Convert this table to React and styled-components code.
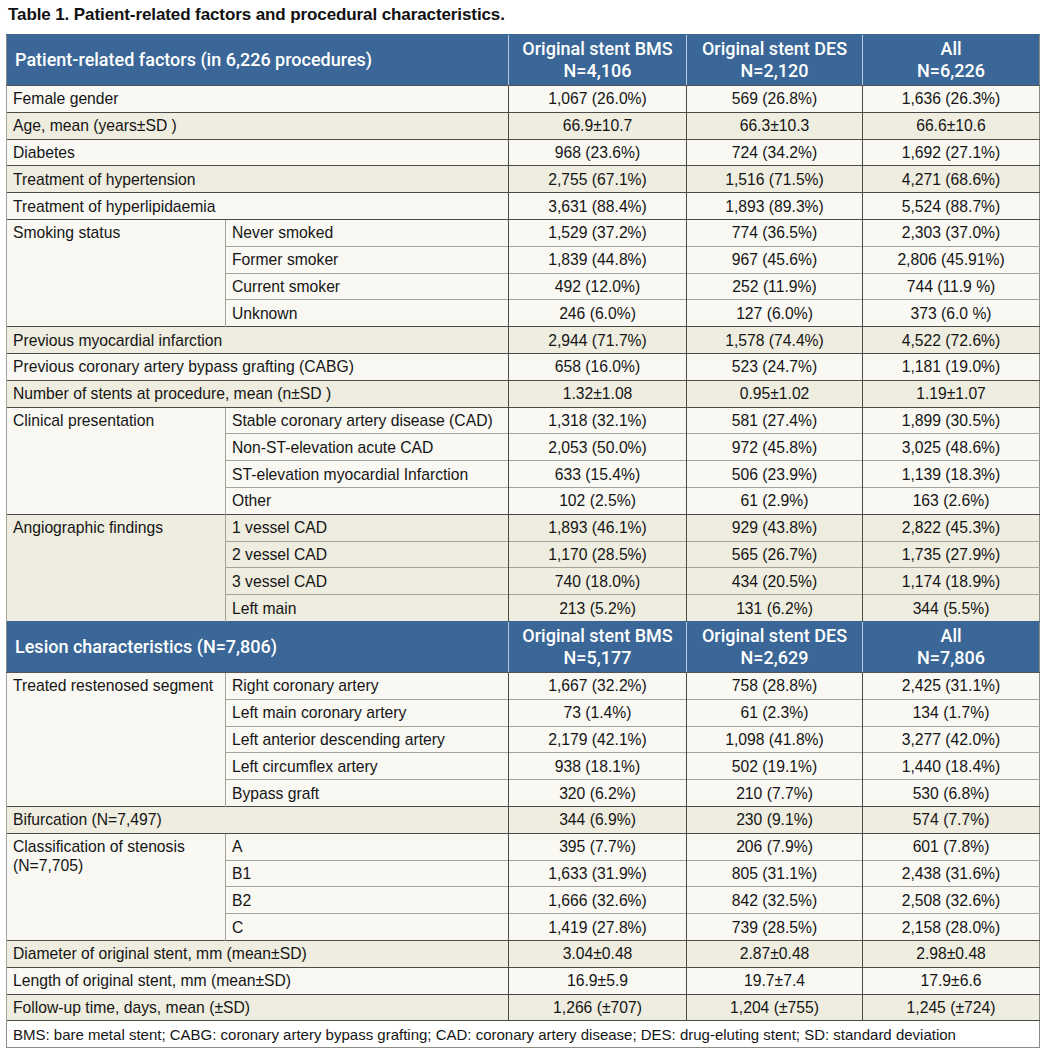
import React from 'react';
import styled, { createGlobalStyle } from 'styled-components';

const Global = createGlobalStyle`
  html, body { margin: 0; padding: 0; background: #ffffff; }
  body { font-family: "Liberation Sans", Arial, sans-serif; color: #151515; }
`;

const Page = styled.div`
  padding: 4px 6px 0 6px;
  width: 1033px;
`;

const Title = styled.h1`
  margin: 0 0 0 2px;
  height: 30px;
  line-height: 22px;
  font-size: 17px;
  font-weight: 700;
  letter-spacing: -0.1px;
  color: #111;
`;

const Table = styled.table`
  width: 1033px;
  border-collapse: collapse;
  table-layout: fixed;
  font-size: 15.7px;
  border-left: 1px solid #8c8c86;
  border-right: 1px solid #8c8c86;
`;

const HeadRow = styled.tr`
  height: 51px;
  background: #3a6797;
`;

const HeadCell = styled.th`
  color: #ffffff;
  font-family: Roboto, "Liberation Sans", sans-serif;
  font-weight: 500;
  font-size: 18px;
  line-height: 22px;
  text-align: ${p => (p.$left ? 'left' : 'center')};
  padding: ${p => (p.$left ? '0 8px' : '0 4px')};
  border-left: ${p => (p.$left ? 'none' : '1px solid #b9c8da')};
  border-top: 1px solid #3a6797;
  border-bottom: 1px solid #555;
  vertical-align: middle;
  white-space: nowrap;
`;

const Row = styled.tr`
  height: 26.8px;
  background: ${p => (p.$shaded ? '#efeddf' : '#f9f8f3')};
`;

const Cell = styled.td`
  padding: 0 6px;
  line-height: 19px;
  vertical-align: ${p => (p.$top ? 'top' : 'middle')};
  padding-top: ${p => (p.$top ? '3px' : '0')};
  text-align: ${p => (p.$center ? 'center' : 'left')};
  border-top: 1px solid ${p => (p.$sub ? '#a3a39c' : '#4a4a48')};
  border-left: 1px solid ${p => (p.$soft ? '#a3a39c' : '#4a4a48')};
  white-space: nowrap;
`;

const LabelCell = styled(Cell)`
  white-space: ${p => (p.$wrap ? 'normal' : 'nowrap')};
`;

const FootRow = styled.tr`
  height: 27px;
  background: #ffffff;
`;

const FootCell = styled.td`
  padding: 0 6px;
  font-size: 15px;
  border-top: 1px solid #4a4a48;
  border-bottom: 1px solid #8c8c86;
  vertical-align: middle;
`;

const patient = [
  { label: 'Female gender', v: ['1,067 (26.0%)', '569 (26.8%)', '1,636 (26.3%)'] },
  { label: 'Age, mean (years±SD )', v: ['66.9±10.7', '66.3±10.3', '66.6±10.6'], shaded: true },
  { label: 'Diabetes', v: ['968 (23.6%)', '724 (34.2%)', '1,692 (27.1%)'] },
  { label: 'Treatment of hypertension', v: ['2,755 (67.1%)', '1,516 (71.5%)', '4,271 (68.6%)'], shaded: true },
  { label: 'Treatment of hyperlipidaemia', v: ['3,631 (88.4%)', '1,893 (89.3%)', '5,524 (88.7%)'] },
  {
    label: 'Smoking status',
    subs: [
      ['Never smoked', '1,529 (37.2%)', '774 (36.5%)', '2,303 (37.0%)'],
      ['Former smoker', '1,839 (44.8%)', '967 (45.6%)', '2,806 (45.91%)'],
      ['Current smoker', '492 (12.0%)', '252 (11.9%)', '744 (11.9 %)'],
      ['Unknown', '246 (6.0%)', '127 (6.0%)', '373 (6.0 %)'],
    ],
  },
  { label: 'Previous myocardial infarction', v: ['2,944 (71.7%)', '1,578 (74.4%)', '4,522 (72.6%)'], shaded: true },
  { label: 'Previous coronary artery bypass grafting (CABG)', v: ['658 (16.0%)', '523 (24.7%)', '1,181 (19.0%)'] },
  { label: 'Number of stents at procedure, mean (n±SD )', v: ['1.32±1.08', '0.95±1.02', '1.19±1.07'], shaded: true },
  {
    label: 'Clinical presentation',
    subs: [
      ['Stable coronary artery disease (CAD)', '1,318 (32.1%)', '581 (27.4%)', '1,899 (30.5%)'],
      ['Non-ST-elevation acute CAD', '2,053 (50.0%)', '972 (45.8%)', '3,025 (48.6%)'],
      ['ST-elevation myocardial Infarction', '633 (15.4%)', '506 (23.9%)', '1,139 (18.3%)'],
      ['Other', '102 (2.5%)', '61 (2.9%)', '163 (2.6%)'],
    ],
  },
  {
    label: 'Angiographic findings',
    shaded: true,
    subs: [
      ['1 vessel CAD', '1,893 (46.1%)', '929 (43.8%)', '2,822 (45.3%)'],
      ['2 vessel CAD', '1,170 (28.5%)', '565 (26.7%)', '1,735 (27.9%)'],
      ['3 vessel CAD', '740 (18.0%)', '434 (20.5%)', '1,174 (18.9%)'],
      ['Left main', '213 (5.2%)', '131 (6.2%)', '344 (5.5%)'],
    ],
  },
];

const lesion = [
  {
    label: 'Treated restenosed segment',
    subs: [
      ['Right coronary artery', '1,667 (32.2%)', '758 (28.8%)', '2,425 (31.1%)'],
      ['Left main coronary artery', '73 (1.4%)', '61 (2.3%)', '134 (1.7%)'],
      ['Left anterior descending artery', '2,179 (42.1%)', '1,098 (41.8%)', '3,277 (42.0%)'],
      ['Left circumflex artery', '938 (18.1%)', '502 (19.1%)', '1,440 (18.4%)'],
      ['Bypass graft', '320 (6.2%)', '210 (7.7%)', '530 (6.8%)'],
    ],
  },
  { label: 'Bifurcation (N=7,497)', v: ['344 (6.9%)', '230 (9.1%)', '574 (7.7%)'], shaded: true },
  {
    label: 'Classification of stenosis (N=7,705)',
    wrap: true,
    subs: [
      ['A', '395 (7.7%)', '206 (7.9%)', '601 (7.8%)'],
      ['B1', '1,633 (31.9%)', '805 (31.1%)', '2,438 (31.6%)'],
      ['B2', '1,666 (32.6%)', '842 (32.5%)', '2,508 (32.6%)'],
      ['C', '1,419 (27.8%)', '739 (28.5%)', '2,158 (28.0%)'],
    ],
  },
  { label: 'Diameter of original stent, mm (mean±SD)', v: ['3.04±0.48', '2.87±0.48', '2.98±0.48'], shaded: true },
  { label: 'Length of original stent, mm (mean±SD)', v: ['16.9±5.9', '19.7±7.4', '17.9±6.6'] },
  { label: 'Follow-up time, days, mean (±SD)', v: ['1,266 (±707)', '1,204 (±755)', '1,245 (±724)'], shaded: true },
];

function Header({ title, n }) {
  return (
    <HeadRow>
      <HeadCell $left colSpan={2}>{title}</HeadCell>
      <HeadCell>Original stent BMS<br />N={n[0]}</HeadCell>
      <HeadCell>Original stent DES<br />N={n[1]}</HeadCell>
      <HeadCell>All<br />N={n[2]}</HeadCell>
    </HeadRow>
  );
}

function Values({ v, sub }) {
  return v.map((x, i) => (
    <Cell key={i} $center $sub={sub}>{x}</Cell>
  ));
}

function Group({ g }) {
  if (!g.subs) {
    return (
      <Row $shaded={g.shaded}>
        <LabelCell colSpan={2} $soft>{g.label}</LabelCell>
        <Values v={g.v} />
      </Row>
    );
  }
  return g.subs.map((s, i) => (
    <Row key={i} $shaded={g.shaded}>
      {i === 0 && (
        <LabelCell rowSpan={g.subs.length} $top $soft $wrap={g.wrap}>{g.label}</LabelCell>
      )}
      <Cell $soft $sub={i > 0}>{s[0]}</Cell>
      <Values v={s.slice(1)} sub={i > 0} />
    </Row>
  ));
}

export default function App() {
  return (
    <>
      <Global />
      <Page>
        <Title>Table 1. Patient-related factors and procedural characteristics.</Title>
        <Table>
          <colgroup>
            <col style={{ width: 219 }} />
            <col style={{ width: 283 }} />
            <col style={{ width: 178 }} />
            <col style={{ width: 176 }} />
            <col style={{ width: 177 }} />
          </colgroup>
          <tbody>
            <Header title="Patient-related factors (in 6,226 procedures)" n={['4,106', '2,120', '6,226']} />
            {patient.map((g, i) => <Group key={i} g={g} />)}
            <Header title="Lesion characteristics (N=7,806)" n={['5,177', '2,629', '7,806']} />
            {lesion.map((g, i) => <Group key={i} g={g} />)}
            <FootRow>
              <FootCell colSpan={5}>
                BMS: bare metal stent; CABG: coronary artery bypass grafting; CAD: coronary artery disease; DES: drug-eluting stent; SD: standard deviation
              </FootCell>
            </FootRow>
          </tbody>
        </Table>
      </Page>
    </>
  );
}
